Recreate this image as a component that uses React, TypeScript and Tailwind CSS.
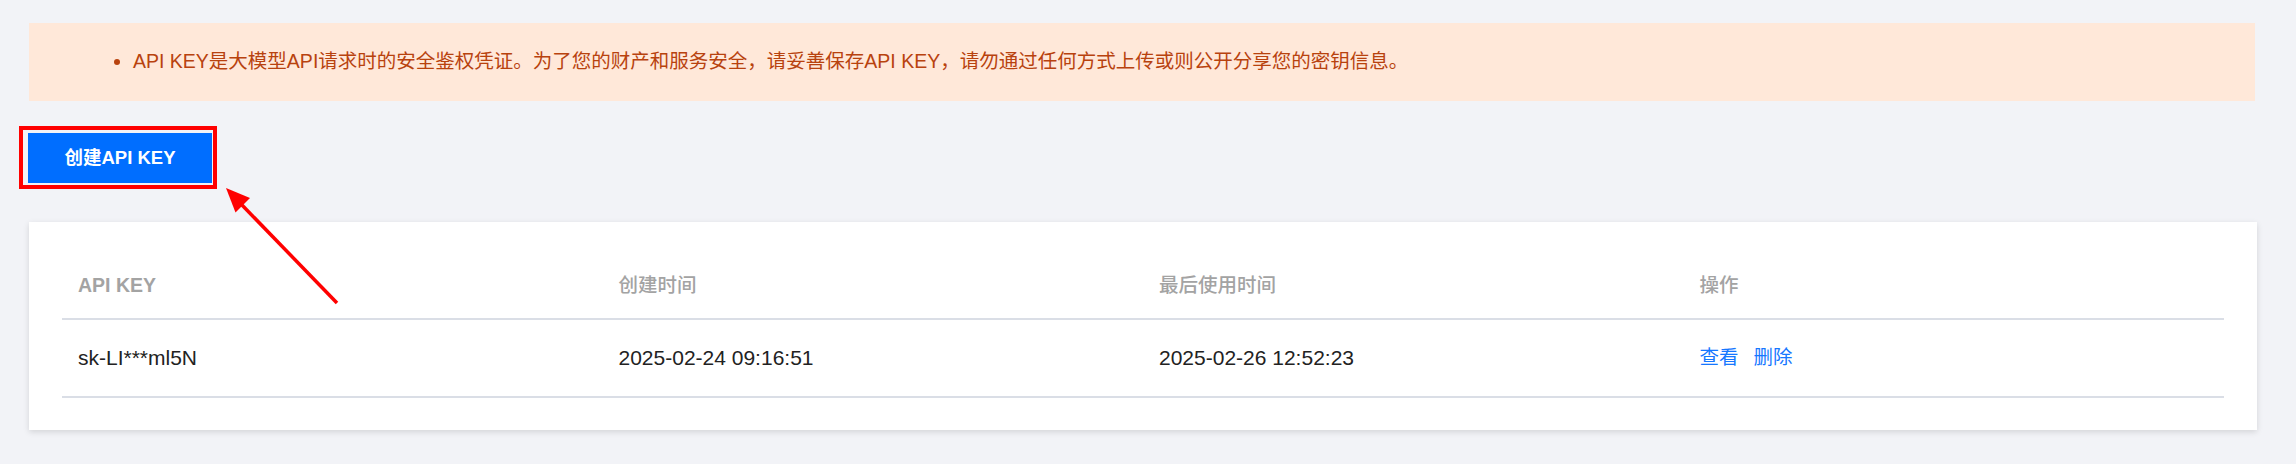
export default function App() {
  const headers = ["API KEY", "创建时间", "最后使用时间", "操作"];
  return (
    <div className="relative min-h-[464px] w-full bg-[#f2f3f7] font-['Liberation_Sans','Noto_Sans_CJK_SC',sans-serif] pl-[29px] pr-[39px] pt-[23px] pb-[34px] flex flex-col items-start">
      {/* notice banner */}
      <div className="self-stretch mr-[2px] h-[78px] bg-[#ffe8d9] flex items-center pl-[85px]">
        <span className="w-[6px] h-[6px] rounded-full bg-[#b8420e] shrink-0" />
        <span className="ml-[13px] text-[19.5px] text-[#b8420e] whitespace-nowrap leading-none">
          API KEY是大模型API请求时的安全鉴权凭证。为了您的财产和服务安全，请妥善保存API KEY，请勿通过任何方式上传或则公开分享您的密钥信息。
        </span>
      </div>

      {/* create button */}
      <button className="-ml-px mt-[32px] h-[50px] w-[184px] bg-[#006eff] text-white text-[18.5px] font-semibold flex items-center justify-center leading-none">
        创建API KEY
      </button>

      {/* table card */}
      <div className="self-stretch mt-[39px] bg-white shadow-[0_2px_6px_rgba(0,0,0,0.13)] px-[33px] py-[32px]">
        <div className="grid grid-cols-4 h-[66px] items-center border-b-2 border-[#dadee6]">
          {headers.map((h, i) => (
            <div
              key={h}
              className={`pl-[16px] text-[19.5px] text-[#a3a3a3] ${i === 0 ? "font-bold" : "font-medium"}`}
            >
              {h}
            </div>
          ))}
        </div>
        <div className="grid grid-cols-4 h-[78px] items-center border-b-2 border-[#dadee6]">
          <div className="pl-[16px] text-[21px] text-[#222222]">sk-LI***ml5N</div>
          <div className="pl-[16px] text-[21px] text-[#222222]">2025-02-24 09:16:51</div>
          <div className="pl-[16px] text-[21px] text-[#222222]">2025-02-26 12:52:23</div>
          <div className="pl-[16px] flex items-center gap-[15px] text-[19.5px] text-[#1677ff]">
            <span>查看</span>
            <span>删除</span>
          </div>
        </div>
      </div>

      {/* annotation overlays */}
      <div className="absolute left-[19px] top-[126px] w-[198px] h-[63px] border-4 border-[#ff0000] pointer-events-none" />
      <svg
        className="absolute left-0 top-0 pointer-events-none"
        width="400"
        height="330"
        viewBox="0 0 400 330"
      >
        <line x1="337" y1="303" x2="242" y2="205" stroke="#ff0000" strokeWidth="3.5" />
        <polygon points="226,188 250,198 235.5,212.5" fill="#ff0000" />
      </svg>
    </div>
  );
}
